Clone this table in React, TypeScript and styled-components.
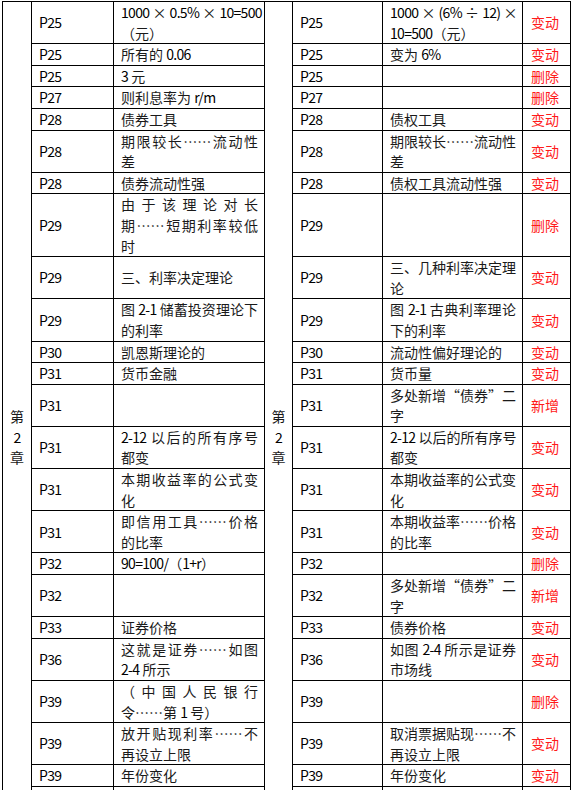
import { styled, createGlobalStyle } from "styled-components";
import { Fragment } from "react";

const GlobalStyle = createGlobalStyle`
  html, body {
    margin: 0;
    padding: 0;
    background: #ffffff;
  }
  body {
    font-family: "Noto Sans CJK SC", "Noto Sans", sans-serif;
    font-size: 14px;
    color: #1a1a1a;
  }
`;

const Sheet = styled.table`
  margin: 1px 0 0 2px;
  border-collapse: collapse;
  table-layout: fixed;
  width: 569px;
  line-height: 20.6px;
`;

const Cell = styled.td`
  border: 1px solid #000;
  padding: 0 6px 0 7px;
  vertical-align: middle;
  overflow: visible;
`;

const ChapterCell = styled.td<{ $top: number }>`
  border: 1px solid #000;
  padding: ${(p) => p.$top}px 0 0;
  vertical-align: top;
  text-align: center;
`;

const PageCell = styled(Cell)`
  color: #000;
`;

const TextCell = styled(Cell)`
  text-align: left;
`;

const StatusCell = styled(Cell)`
  color: #ff1a1a;
  padding-left: 8px;
`;

const Line = styled.div<{ $fill?: boolean }>`
  display: block;
  white-space: nowrap;
  ${(p) => (p.$fill ? "text-align: justify; text-align-last: justify;" : "")}
`;

const Latin = styled.span`
  color: #000;
  letter-spacing: -0.7px;
`;

const FillerRow = styled.tr`
  height: 21px;
`;

// split latin runs so digits can be set a little tighter, like Calibri
function Mixed({ text }: { text: string }) {
  const parts = text.split(/([\x21-\x7E](?:[\x20-\x7E]*[\x21-\x7E])?)/);
  return (
    <>
      {parts.map((p, i) =>
        i % 2 === 1 ? <Latin key={i}>{p}</Latin> : <Fragment key={i}>{p}</Fragment>
      )}
    </>
  );
}

// lines marked with a leading "|" are filled to the full width
function Para({ lines }: { lines: string[] }) {
  return (
    <>
      {lines.map((l, i) => {
        const fill = l.startsWith("|");
        return (
          <Line key={i} $fill={fill}>
            <Mixed text={fill ? l.slice(1) : l} />
          </Line>
        );
      })}
    </>
  );
}

type Row = {
  page: string;
  before: string[];
  after: string[];
  status: "变动" | "删除" | "新增";
};

const rows: Row[] = [
  { page: "P25", before: ["|1000 × 0.5% × 10=500", "（元）"], after: ["|1000 × (6% ÷ 12)  ×", "10=500（元）"], status: "变动" },
  { page: "P25", before: ["所有的 0.06"], after: ["变为 6%"], status: "变动" },
  { page: "P25", before: ["3 元"], after: [], status: "删除" },
  { page: "P27", before: ["则利息率为 r/m"], after: [], status: "删除" },
  { page: "P28", before: ["债券工具"], after: ["债权工具"], status: "变动" },
  { page: "P28", before: ["|期限较长……流动性", "差"], after: ["|期限较长……流动性", "差"], status: "变动" },
  { page: "P28", before: ["债券流动性强"], after: ["债权工具流动性强"], status: "变动" },
  { page: "P29", before: ["|由于该理论对长", "|期……短期利率较低", "时"], after: [], status: "删除" },
  { page: "P29", before: ["三、利率决定理论"], after: ["|三、几种利率决定理", "论"], status: "变动" },
  { page: "P29", before: ["|图 2-1 储蓄投资理论下", "的利率"], after: ["|图 2-1 古典利率理论", "下的利率"], status: "变动" },
  { page: "P30", before: ["凯恩斯理论的"], after: ["流动性偏好理论的"], status: "变动" },
  { page: "P31", before: ["货币金融"], after: ["货币量"], status: "变动" },
  { page: "P31", before: [], after: ["|多处新增“债券”二", "字"], status: "新增" },
  { page: "P31", before: ["|2-12 以后的所有序号", "都变"], after: ["|2-12 以后的所有序号", "都变"], status: "变动" },
  { page: "P31", before: ["|本期收益率的公式变", "化"], after: ["|本期收益率的公式变", "化"], status: "变动" },
  { page: "P31", before: ["|即信用工具……价格", "的比率"], after: ["|本期收益率……价格", "的比率"], status: "变动" },
  { page: "P32", before: ["90=100/（1+r）"], after: [], status: "删除" },
  { page: "P32", before: [], after: ["|多处新增“债券”二", "字"], status: "新增" },
  { page: "P33", before: ["证券价格"], after: ["债券价格"], status: "变动" },
  { page: "P36", before: ["|这就是证券……如图", "2-4 所示"], after: ["|如图 2-4 所示是证券", "市场线"], status: "变动" },
  { page: "P39", before: ["|（中国人民银行", "令……第 1 号）"], after: [], status: "删除" },
  { page: "P39", before: ["|放开贴现利率……不", "再设立上限"], after: ["|取消票据贴现……不", "再设立上限"], status: "变动" },
  { page: "P39", before: ["年份变化"], after: ["年份变化"], status: "变动" },
];

function Chapter({ top, span }: { top: number; span: number }) {
  return (
    <ChapterCell rowSpan={span} $top={top}>
      <Line>第</Line>
      <Line>
        <Latin>2</Latin>
      </Line>
      <Line>章</Line>
    </ChapterCell>
  );
}

export default function App() {
  const span = rows.length + 1;
  return (
    <>
      <GlobalStyle />
      <Sheet>
        <colgroup>
          <col style={{ width: 29 }} />
          <col style={{ width: 82 }} />
          <col style={{ width: 151 }} />
          <col style={{ width: 28 }} />
          <col style={{ width: 90 }} />
          <col style={{ width: 140 }} />
          <col style={{ width: 48 }} />
        </colgroup>
        <tbody>
          {rows.map((r, i) => (
            <tr key={i}>
              {i === 0 && <Chapter top={404} span={span} />}
              <PageCell>
                <Latin>{r.page}</Latin>
              </PageCell>
              <TextCell>
                <Para lines={r.before} />
              </TextCell>
              {i === 0 && <Chapter top={404} span={span} />}
              <PageCell>
                <Latin>{r.page}</Latin>
              </PageCell>
              <TextCell>
                <Para lines={r.after} />
              </TextCell>
              <StatusCell>{r.status}</StatusCell>
            </tr>
          ))}
          <FillerRow>
            <PageCell />
            <TextCell />
            <PageCell />
            <TextCell />
            <StatusCell />
          </FillerRow>
        </tbody>
      </Sheet>
    </>
  );
}
